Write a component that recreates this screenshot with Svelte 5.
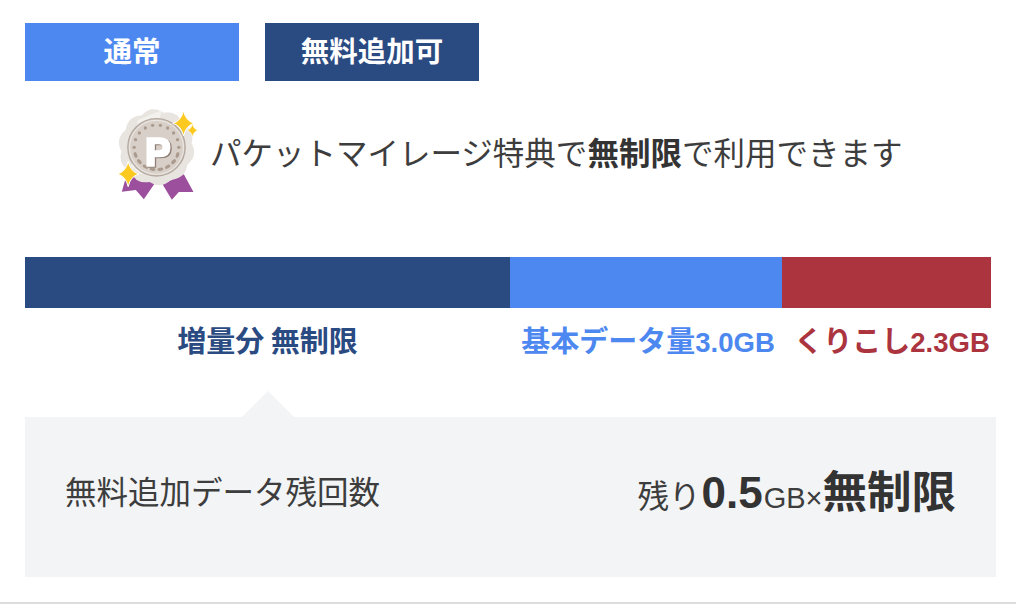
<script>
  const starPath = (cx, cy, r) => {
    const k = r * 0.18;
    const w = r * 0.85;
    return `M${cx} ${cy - r}Q${cx + k} ${cy - k} ${cx + w} ${cy}Q${cx + k} ${cy + k} ${cx} ${cy + r}Q${cx - k} ${cy + k} ${cx - w} ${cy}Q${cx - k} ${cy - k} ${cx} ${cy - r}Z`;
  };
  const rosette = (() => {
    const n = 10, cx = 168, cy = 157;
    let d = '';
    for (let i = 0; i < n; i++) {
      const a = (i / n) * Math.PI * 2 - Math.PI / 2 + 0.2;
      const b = ((i + 0.5) / n) * Math.PI * 2 - Math.PI / 2 + 0.2;
      const c = ((i + 1) / n) * Math.PI * 2 - Math.PI / 2 + 0.2;
      if (i === 0) d += `M${cx + 106 * Math.cos(a)} ${cy + 106 * Math.sin(a)}`;
      d += `Q${cx + 128 * Math.cos(b)} ${cy + 128 * Math.sin(b)} ${cx + 106 * Math.cos(c)} ${cy + 106 * Math.sin(c)}`;
    }
    return d + 'Z';
  })();
  const dots = Array.from({ length: 18 }, (_, i) => {
    const a = (i / 18) * Math.PI * 2;
    return { x: 168 + 67 * Math.cos(a), y: 157 + 67 * Math.sin(a), lower: Math.sin(a) > 0.1, deg: (a * 180) / Math.PI + 90 };
  });
  const bars = [
    { cls: 'navy', width: 485, text: '増量分 無制限', shift: 0 },
    { cls: 'blue', width: 272, text: '基本データ量', num: '3.0GB', shift: 4 },
    { cls: 'red', width: 209, text: 'くりこし', num: '2.3GB', shift: 11 }
  ];
</script>

<main class="page">
  <div class="tabs">
    <div class="tab tab-blue">通常</div>
    <div class="tab tab-navy">無料追加可</div>
  </div>

  <div class="perk">
    <svg class="medal" viewBox="50 30 245 285" aria-hidden="true">
      <path d="M78 240L64 290L106 285L130 313L165 262Z" fill="#9c4f9d" />
      <path d="M250 238L279 291L235 291L214 314L186 268Z" fill="#9c4f9d" />
      <path d={rosette} fill="#e8e4df" />
      <path d="M112 75L185 45L125 240L92 215Z" fill="#f3f1ee" />
      <circle cx="168" cy="157" r="86" fill="#d8d0c8" stroke="#b3a89f" stroke-width="4" />
      <circle cx="168" cy="157" r="81" fill="none" stroke="#eeeae6" stroke-width="3" />
      {#each dots as d}
        {#if d.lower}
          <ellipse cx={d.x} cy={d.y} rx="9" ry="5" fill="#ab9a8e" transform={`rotate(${d.deg} ${d.x} ${d.y})`} />
        {:else}
          <circle cx={d.x} cy={d.y} r="5" fill="#ab9a8e" />
        {/if}
      {/each}
      <path d="M138 127H178Q210 127 210 157Q210 187 178 187H163V215H138Z M163 148V166H175Q186 166 186 157Q186 148 175 148Z" fill="#8f8178" fill-rule="evenodd" transform="translate(4 3)" />
      <path d="M138 127H178Q210 127 210 157Q210 187 178 187H163V215H138Z M163 148V166H175Q186 166 186 157Q186 148 175 148Z" fill="#fff" fill-rule="evenodd" />
      <path d={starPath(249, 85, 38)} fill="#fbc91f" stroke="#fff" stroke-width="3" />
      <path d={starPath(276, 106, 20)} fill="#fbc91f" stroke="#fff" stroke-width="2" />
      <path d={starPath(83, 237, 38)} fill="#fbc91f" stroke="#fff" stroke-width="3" />
    </svg>
    <p class="perk-text">パケットマイレージ特典で<b>無制限</b>で利用できます</p>
  </div>

  <div class="bars">
    {#each bars as b}
      <div class={`seg ${b.cls}`} style={`width:${b.width}px`}></div>
    {/each}
  </div>
  <div class="labels">
    {#each bars as b}
      <div class={`label ${b.cls}-text`} style={`width:${b.width}px;padding-left:${b.shift}px`}>
        <span>{b.text}</span>{#if b.num}<span class="num">{b.num}</span>{/if}
      </div>
    {/each}
  </div>

  <section class="panel">
    <span class="panel-title">無料追加データ残回数</span>
    <span class="panel-value"><span class="remain">残り</span><b class="big">0.5</b><span class="unit">GB×</span><b class="huge">無制限</b></span>
  </section>
  <div class="rule"></div>
</main>

<style>
  :global(body) {
    margin: 0;
    background: #fff;
  }
  .page {
    width: 1016px;
    height: 605px;
    box-sizing: border-box;
    padding-top: 23px;
    overflow: hidden;
    display: flex;
    flex-direction: column;
    font-family: "Noto Sans CJK JP", "Noto Sans", sans-serif;
    color: #3d3d3d;
  }
  .tabs {
    display: flex;
    gap: 26px;
    padding-left: 25px;
  }
  .tab {
    width: 214px;
    height: 58px;
    box-sizing: border-box;
    padding-bottom: 4px;
    display: flex;
    align-items: center;
    justify-content: center;
    color: #fff;
    font-size: 28.5px;
    font-weight: 700;
    line-height: 1;
  }
  .tab-blue { background: #4d88f0; }
  .tab-navy { background: #2a4a82; }
  .perk {
    display: flex;
    align-items: center;
    gap: 11px;
    padding-left: 117px;
    height: 95px;
    margin-top: 24px;
  }
  .medal {
    width: 82px;
    height: 95px;
    flex: none;
    filter: blur(0.4px);
  }
  .perk-text {
    margin: 0 0 1px;
    font-size: 31.5px;
    line-height: 1;
    white-space: nowrap;
  }
  .perk-text b { font-weight: 700; color: #333; }
  .bars {
    display: flex;
    margin: 57px 0 0 25px;
    height: 51px;
  }
  .seg { height: 100%; }
  .navy { background: #2a4a82; }
  .blue { background: #4d88f0; }
  .red { background: #ab343f; }
  .labels {
    display: flex;
    margin: 14px 0 0 25px;
    height: 34px;
  }
  .label {
    display: flex;
    justify-content: center;
    align-items: baseline;
    white-space: nowrap;
    font-size: 29px;
    font-weight: 700;
    line-height: 34px;
    box-sizing: border-box;
  }
  .num {
    font-family: "Liberation Sans", sans-serif;
    font-size: 27.5px;
  }
  .navy-text { color: #2a4a82; }
  .blue-text { color: #4d88f0; }
  .red-text { color: #ab343f; }
  .panel {
    position: relative;
    margin: 61px 0 0 25px;
    width: 971px;
    height: 160px;
    box-sizing: border-box;
    padding: 0 40px 13px 40px;
    background: #f3f4f6;
    display: flex;
    align-items: center;
    justify-content: space-between;
  }
  .panel::before {
    content: "";
    position: absolute;
    left: 217px;
    top: -26px;
    border-left: 26px solid transparent;
    border-right: 26px solid transparent;
    border-bottom: 26px solid #f3f4f6;
  }
  .panel-title {
    font-size: 31.5px;
    line-height: 1;
    white-space: nowrap;
  }
  .panel-value {
    display: flex;
    align-items: baseline;
    font-size: 31.5px;
    line-height: 1;
    white-space: nowrap;
  }
  .remain { margin-right: 1px; }
  .big {
    font-family: "Liberation Sans", sans-serif;
    font-size: 44px;
    font-weight: 700;
    color: #333;
    margin-right: 1px;
  }
  .unit {
    font-family: "Liberation Sans", sans-serif;
    font-size: 29px;
  }
  .huge {
    font-size: 44.5px;
    font-weight: 700;
    color: #333;
  }
  .rule {
    height: 2px;
    background: #dcdcdc;
    margin-top: 25px;
    flex: none;
  }
</style>
